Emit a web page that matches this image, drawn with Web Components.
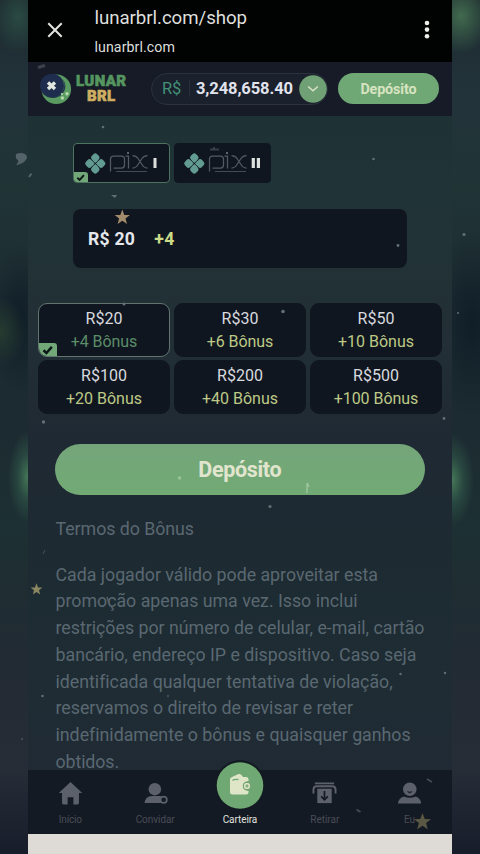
<!DOCTYPE html>
<html lang="pt-BR">
<head>
<meta charset="utf-8">
<title>lunarbrl.com/shop</title>
<style>
html,body{margin:0;height:854px;overflow:hidden;background:#202c35}
body{font-family:Roboto,"Liberation Sans",sans-serif}
</style>
</head>
<body>
<lunar-page></lunar-page>
<script>
const define = (name, html, setup) => customElements.define(name, class extends HTMLElement {
  connectedCallback() {
    if (this.shadowRoot) return;
    const root = this.attachShadow({mode: 'open'});
    const t = document.createElement('template');
    t.innerHTML = html;
    root.append(t.content.cloneNode(true));
    if (setup) setup(this, root);
  }
});

/* One line of text tracked to the width given in "w". */
define('fit-text', `<style>:host{display:inline-block;white-space:nowrap}span{display:inline-block}</style><span></span>`, (el, root) => {
  const s = root.querySelector('span');
  const text = el.getAttribute('text');
  s.textContent = text;
  const w = Number(el.getAttribute('w'));
  s.style.letterSpacing = '0';
  const gap = (w - s.getBoundingClientRect().width) / text.length;
  s.style.letterSpacing = gap + 'px';
  s.style.marginRight = -gap + 'px';
});

define('url-bar', `<style>
:host{display:flex;height:62px;background:#010202;color:#dedfdd;box-sizing:border-box;padding:0 18px 0 19px}
.close{width:16px;height:16px;margin-top:22px}
.txt{display:flex;flex-direction:column;align-items:flex-start;flex:1;margin-left:31.5px;padding-top:5.5px}
.a{font-size:18.7px;line-height:24px}.b{font-size:14.2px;line-height:18px;margin-top:8.5px}
.dots{width:14px;height:24px;margin-top:18px}
</style>
<svg class="close" viewBox="0 0 16 16"><path d="M1.3 1.3l13.4 13.4M14.7 1.3L1.3 14.7" stroke="#e4e4e0" stroke-width="2"/></svg>
<div class="txt"><fit-text class="a" text="lunarbrl.com/shop" w="152.5"></fit-text><fit-text class="b" text="lunarbrl.com" w="80.5"></fit-text></div>
<svg class="dots" viewBox="0 0 14 24"><g fill="#eeeeea"><circle cx="7" cy="5" r="2.3"/><circle cx="7" cy="11.6" r="2.3"/><circle cx="7" cy="18.2" r="2.3"/></g></svg>`);

define('lunar-logo', `<style>
:host{display:flex;width:88px;height:34px;align-items:center}
.m{width:32px;height:34px;flex:none}
.w{display:flex;flex-direction:column;align-items:center;margin-left:4px;font:900 15px/14.5px Roboto,"Liberation Sans",sans-serif;color:#55955f;-webkit-text-stroke:.6px currentColor}
.y{color:#cfae62}
</style>
<svg class="m" viewBox="0 0 32 34"><circle cx="16.3" cy="17.3" r="14.8" fill="#5a9b62"/><circle cx="12" cy="13.8" r="12" fill="#1e2c4e"/><path d="M1.500 17Q9 29 19 23Q27 17 23 7Q29 17 20 24Q8 30 1.500 17" fill="#223a4c"/><path d="M8 10.500l7 6.500M15 10.500l-7 6.500" stroke="#e1e5df" stroke-width="3.4"/><circle cx="22.4" cy="26" r="1.700" fill="#b8d7ae"/><circle cx="27" cy="21.700" r="1.700" fill="#b8d7ae"/><circle cx="22" cy="22" r="1.100" fill="#b8d7ae"/></svg>
<div class="w"><fit-text text="LUNAR" w="50.5"></fit-text><fit-text class="y" text="BRL" w="28.5"></fit-text></div>`);

define('site-header', `<style>
:host{display:flex;height:54px;background:#171b27;align-items:center;box-sizing:border-box;padding:0 13px 1px 12px}
.bal{display:flex;align-items:center;box-sizing:border-box;width:177px;height:32px;margin-left:23px;border:1px solid #29323d;border-radius:16px;background:#1a202c;padding-left:10px}
.rs{font-size:16.5px;color:#439078}
.sep{width:1px;height:17px;background:#292d39;margin:0 6px 0 8px}
.n{font-size:16.5px;font-weight:700;color:#e1e3ed}
.go{width:28px;height:28px;margin-left:6px;flex:none}
.dep{display:flex;align-items:center;justify-content:center;width:101px;height:31px;margin-left:10px;border-radius:16px;background:#70a875;color:#d7e3c0;font-size:14.3px;font-weight:700}
</style>
<lunar-logo></lunar-logo>
<div class="bal"><fit-text class="rs" text="R$" w="19"></fit-text><i class="sep"></i><fit-text class="n" text="3,248,658.40" w="97"></fit-text>
<svg class="go" viewBox="0 0 28 28"><circle cx="14" cy="14" r="13.8" fill="#70a175"/><path d="M9.2 11.5l4.8 4.3 4.8-4.3" fill="none" stroke="#d8e2c9" stroke-width="1.5"/></svg></div>
<div class="dep"><fit-text text="Depósito" w="56"></fit-text></div>`);

define('check-tag', `<style>:host{display:block;background:#72a878}svg{display:block;width:100%;height:100%}</style>
<svg viewBox="0 0 14 10"><path d="M4 5.2l2.2 2L10.2 2.7" fill="none" stroke="#0c1718" stroke-width="1.8"/></svg>`);

define('pix-tile', `<style>
:host{position:relative;display:flex;align-items:center;width:97px;height:40px;box-sizing:border-box;border:1px solid #101620;border-radius:4px;background:#101620;overflow:hidden}
:host([on]){border-color:#4d7260}
svg{width:95px;height:38px}
:host([two]) svg{margin-left:-2.500px}
check-tag{display:none;position:absolute;left:-1px;bottom:-1px;width:15px;height:11px;border-radius:0 3px 0 3px}
:host([on]) check-tag{display:block}
.two{display:none}:host([two]) .two{display:block}:host([two]) .one{display:none}
</style>
<svg viewBox="0 0 95 38">
<g transform="translate(21.3 19.5) rotate(45)" fill="#629b91"><rect x="-7.900" y="-7.900" width="7.500" height="7.500" rx="2.600"/><rect x=".4" y="-7.900" width="7.500" height="7.500" rx="2.600"/><rect x="-7.900" y=".4" width="7.500" height="7.500" rx="2.600"/><rect x=".4" y=".4" width="7.500" height="7.500" rx="2.600"/><rect x="-4" y="-4" width="3.600" height="3.600"/><rect x=".4" y="-4" width="3.600" height="3.600"/><rect x="-4" y=".4" width="3.600" height="3.600"/><rect x=".4" y=".4" width="3.600" height="3.600"/></g>
<g fill="none" stroke="#555863" stroke-width="1.25"><path d="M36.5 27.5V15q0-3 3-3h8q3 0 3 3v6q0 3-3 3h-8"/><path d="M51.500 12h3v12.5M58.5 11.5q3.500 0 5.500 3l4 6q2 3.500 5.500 3.500M73.500 11.500q-3.500 0-5.500 3l-4 6q-2 3.500-5.500 3.500"/><path d="M42 27.500h31" stroke-width=".8"/></g><circle cx="54" cy="9" r="1.100" fill="#737680"/>
<g fill="#dde0df"><path class="one" d="M79.500 14h3v10h-3z"/><path class="two" d="M78.700 14h3.200v10h-3.200zM83.800 14h3.200v10h-3.200z"/></g>
</svg><check-tag></check-tag>`);

define('amount-panel', `<style>
:host{display:flex;box-sizing:border-box;width:334px;height:59px;margin:26px 0 0 45px;padding:17.5px 0 0 15px;border-radius:8px;background:#101620;font-size:17.6px;line-height:24px;font-weight:700;color:#e4e8ec}
.b{color:#cbdb88;margin-left:19.500px}
</style><fit-text text="R$ 20" w="47"></fit-text><fit-text class="b" text="+4" w="20.500"></fit-text>`);

define('bonus-card', `<style>
:host{position:relative;display:flex;flex-direction:column;align-items:center;box-sizing:border-box;height:54px;padding-top:2.500px;border:1px solid #101620;border-radius:9px;background:#101620;overflow:hidden;font-size:16px;line-height:23.500px;color:#d8dadf}
.b{color:#bdc986}
:host([on]){border-color:#607570}:host([on]) .b{color:#5b8d68}
check-tag{display:none;position:absolute;left:-1px;bottom:-1px;width:19px;height:14px;border-radius:0 3px 0 9px}
:host([on]) check-tag{display:block}
</style><i class="a"></i><i class="b"></i><check-tag></check-tag>`, (el, root) => {
  [['.a', 'amount', 'aw'], ['.b', 'bonus', 'bw']].forEach(([sel, t, w]) => {
    const f = document.createElement('fit-text');
    f.className = sel.slice(1);
    f.setAttribute('text', el.getAttribute(t));
    f.setAttribute('w', el.getAttribute(w));
    root.querySelector(sel).replaceWith(f);
  });
});

define('terms-text', `<style>
:host{display:flex;flex-direction:column;align-items:flex-start;margin:20.500px 0 0 27.500px;font-size:17.800px;line-height:26.700px;color:#5a6871}
.h{margin-bottom:19.500px}
</style>
<fit-text class="h" text="Termos do Bônus" w="138.500"></fit-text>
<fit-text text="Cada jogador válido pode aproveitar esta" w="322.500"></fit-text>
<fit-text text="promoção apenas uma vez. Isso inclui" w="302"></fit-text>
<fit-text text="restrições por número de celular, e-mail, cartão" w="369"></fit-text>
<fit-text text="bancário, endereço IP e dispositivo. Caso seja" w="361"></fit-text>
<fit-text text="identificada qualquer tentativa de violação," w="336.500"></fit-text>
<fit-text text="reservamos o direito de revisar e reter" w="297.500"></fit-text>
<fit-text text="indefinidamente o bônus e quaisquer ganhos" w="354.500"></fit-text>
<fit-text text="obtidos." w="63.500"></fit-text>`);

define('shop-content', `<style>
:host{display:block;height:654px;box-sizing:border-box;padding-top:27px}
.pix{display:flex;gap:4px;margin-left:45px}
.grid{display:grid;grid-template-columns:repeat(3,132px);gap:3px 4px;margin:35px 0 0 10px}
.dep{display:flex;align-items:center;justify-content:center;width:370px;height:51px;margin:30px 0 0 27px;border-radius:26px;background:linear-gradient(#74a57a,#71aa74);color:#e1e5ce;font-size:21.500px;font-weight:700}
</style>
<div class="pix"><pix-tile on></pix-tile><pix-tile two></pix-tile></div>
<amount-panel></amount-panel>
<div class="grid">
<bonus-card on amount="R$20" aw="37" bonus="+4 Bônus" bw="66.500"></bonus-card>
<bonus-card amount="R$30" aw="37" bonus="+6 Bônus" bw="66.500"></bonus-card>
<bonus-card amount="R$50" aw="37" bonus="+10 Bônus" bw="76"></bonus-card>
<bonus-card amount="R$100" aw="46" bonus="+20 Bônus" bw="76"></bonus-card>
<bonus-card amount="R$200" aw="46" bonus="+40 Bônus" bw="76"></bonus-card>
<bonus-card amount="R$500" aw="46" bonus="+100 Bônus" bw="84.500"></bonus-card>
</div>
<div class="dep"><fit-text text="Depósito" w="83"></fit-text></div>
<terms-text></terms-text>`);

define('nav-item', `<style>
:host{display:flex;flex-direction:column;align-items:center;width:84.800px;color:#484c56;font-size:10px;line-height:13px;padding-top:11px;box-sizing:border-box}
::slotted(svg){width:25px;height:25px;margin-bottom:7px}
:host([on]){color:#e0e2df;padding-top:43px}
:host([on]) ::slotted(svg){position:absolute;top:-11px;left:186px;width:52px;height:52px}
</style><slot></slot><i></i>`, (el, root) => {
  const f = document.createElement('fit-text');
  f.setAttribute('text', el.getAttribute('label'));
  f.setAttribute('w', el.getAttribute('w'));
  root.querySelector('i').replaceWith(f);
});

define('bottom-nav', `<style>:host{position:relative;display:flex;height:63.500px;background:#141a24}</style>
<nav-item label="Início" w="23"><svg viewBox="0 0 26 26"><path d="M13 1L.8 12.500h3.400V23q0 1.500 1.500 1.500H10V17h6v7.500h4.300q1.500 0 1.500-1.500V12.500h3.400z" fill="#5c606b"/></svg></nav-item>
<nav-item label="Convidar" w="39"><svg viewBox="0 0 26 26"><circle cx="12.300" cy="8.500" r="6.500" fill="#5c606b"/><path d="M1.500 23q1-7.500 8-7.500h8q1.500 0 2.500 1-3 3-1 6.500z" fill="#5c606b"/><circle cx="21.500" cy="19.500" r="3.300" fill="none" stroke="#5c606b" stroke-width="1.800"/></svg></nav-item>
<nav-item on label="Carteira" w="34.500"><svg viewBox="0 0 52 52"><circle cx="26" cy="26" r="25" fill="#131a21"/><circle cx="26" cy="26.500" r="23.300" fill="#70a874"/><path d="M16 20.500q0-2 2-2.500L24.500 15q1.500-.5 3 1l1.500 2h3q2.500 0 2.500 2.500v1.500q-5.500.5-5.500 5t5.500 5v1q0 2.500-2.500 2.500H18.500q-2.500 0-2.500-2.500z" fill="#dfe6c7"/><path d="M18.500 21.500q1.500-1.500 6-1" fill="none" stroke="#70a874" stroke-width="1.400"/><circle cx="33" cy="27" r="3.800" fill="#dfe6c7" stroke="#699d6b" stroke-width="1"/><path d="M31.300 27h3.400M33 25.300v3.400" stroke="#699d6b" stroke-width="1"/></svg></nav-item>
<nav-item label="Retirar" w="29"><svg viewBox="0 0 26 26"><path d="M3 2.500h20M1.500 13V9q0-3.500 3.500-3.500h16q3.500 0 3.500 3.500v4" fill="none" stroke="#5c606b" stroke-width="2"/><path d="M5.500 8h15v15h-15z" fill="#5c606b"/><path d="M13 10.500v8M9.500 16l3.500 3.500 3.500-3.500" fill="none" stroke="#141a24" stroke-width="1.800"/></svg></nav-item>
<nav-item label="Eu" w="11"><svg viewBox="0 0 26 26"><circle cx="13.300" cy="8.500" r="7" fill="#5c606b"/><path d="M11 11q2.300 1.500 4.600 0-2.300 3-4.600 0" fill="#20252f" stroke="#20252f"/><path d="M1 23.500q0-5 6-7.500 6.300 3 12.600 0 5.500 2.500 5.500 7.500z" fill="#5c606b"/></svg></nav-item>`);

/* Stars and confetti that float over the page. */
define('confetti-layer', `<style>:host{position:absolute;inset:0;pointer-events:none}svg{display:block}</style>
<svg width="480" height="854" viewBox="0 0 480 854"><defs><path id="s" d="M0-8L2-2.600 7.600-2.500 3.200 1 4.700 6.500 0 3.300-4.700 6.500-3.200 1-7.600-2.500-2-2.600z"/></defs>
<use href="#s" x="122.300" y="217.500" fill="#a18b6b"/><use href="#s" transform="translate(36.500 589.500) scale(.78)" fill="#898761"/><use href="#s" transform="translate(422.500 822) scale(1.120)" fill="#5a5842"/>
<path d="M16 154q5-2 9 0 4 3 0 7-3 3-9 4 3-3 2-5-3-1-2-6" fill="#54636a"/>
<g fill="none" stroke="#55646a" stroke-width="2"><path d="M29 177l2.500-3.500"/><path d="M38 67.500l7-2" stroke="#3e414a" stroke-width="3"/><path d="M210 149.500h9M214 147v2" stroke="#383f48"/><path d="M427 779l5 3M356.500 809.500l4 2.500" stroke="#424a52"/><path d="M43 554l2-4" stroke="#46535b" stroke-width="1"/><path d="M307 483v10M307.500 483l1.500 4" stroke="#9bc39a" stroke-width="1.500"/><path d="M107 597l3 9" stroke-width="1.500"/></g>
<g fill="#607076"><circle cx="373.500" cy="159" r="1.300"/><circle cx="103" cy="127" r="1.300"/><path d="M111 195h6l-2 3z"/><circle cx="398" cy="245.500" r="1.400"/><circle cx="464" cy="234.500" r="1.600"/><circle cx="283" cy="311.500" r="1.800"/><circle cx="124" cy="304" r="1.500"/><circle cx="458" cy="313" r="1"/><circle cx="444" cy="418.500" r="1.400"/><circle cx="43.500" cy="422" r="1.700"/><circle cx="179.500" cy="478" r="1.700" fill="#9bc39a"/><circle cx="270" cy="506.500" r="1.600"/><circle cx="400.500" cy="674" r="1.200"/><circle cx="445" cy="673" r="1.200"/><circle cx="42.500" cy="696" r="1.300"/><circle cx="168" cy="696" r="1.200" opacity=".5"/><circle cx="22" cy="739" r="1.100" opacity=".6"/></g></svg>`);

define('lunar-page', `<style>
:host{display:block;position:relative;width:480px;height:854px;overflow:hidden;background:
radial-gradient(ellipse 20px 46px at 28px 477px,#457757,#31594a99 50%,#31594a00),
radial-gradient(ellipse 22px 46px at 452px 480px,#457757,#31594a99 50%,#31594a00),
radial-gradient(ellipse 26px 36px at 18px 17px,#2a4a43,#2a4a4300),
radial-gradient(ellipse 30px 38px at 461px 16px,#416a4e,#416a4e00),
radial-gradient(ellipse 26px 34px at 0 332px,#263b30,#263b3000),
radial-gradient(ellipse 34px 75px at 20px 320px,#101e27,#101e2700),
radial-gradient(ellipse 42px 95px at 472px 325px,#101e27,#101e2700),
linear-gradient(#1d2a30,#22343a 12%,#203335 22%,#1d2d33 36%,#1c2a31 48%,#1d3033 62%,#222a33 78%,#262d37 90%,#171d2a)}
main{display:flex;flex-direction:column;width:424px;height:854px;margin-left:28px;background:linear-gradient(#1e3235 115px,#213336 230px,#222f36 340px,#1f2933 440px,#1d2b32 600px,#1f2c34 700px,#202a34 770px)}
footer{flex:1;background:#dedbd6}
</style>
<main><url-bar></url-bar><site-header></site-header><shop-content></shop-content><bottom-nav></bottom-nav><footer></footer></main>
<confetti-layer></confetti-layer>`);
</script>
</body>
</html>
